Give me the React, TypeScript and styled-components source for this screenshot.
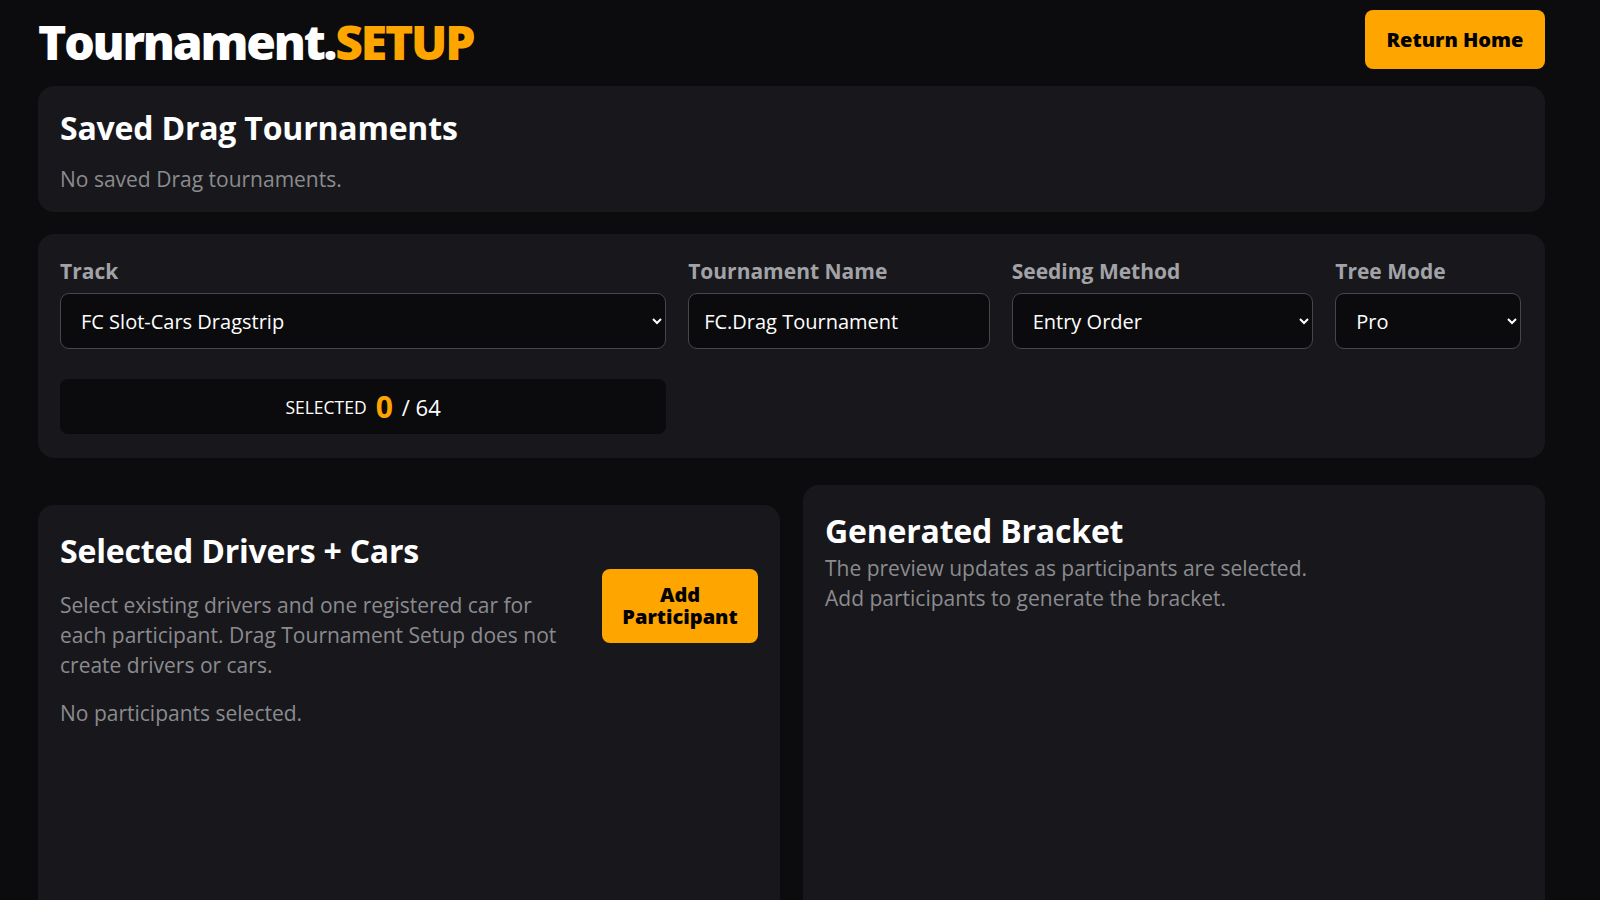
import React from "react";
import styled, { createGlobalStyle } from "styled-components";

const GlobalStyle = createGlobalStyle`
  html, body {
    margin: 0;
    padding: 0;
    background: #0c0c0e;
    color: #ffffff;
    font-family: "Open Sans", "Noto Sans", sans-serif;
  }
  * { box-sizing: border-box; }
`;

const Page = styled.div`
  padding: 10px 55px 38px 38px;
  display: flex;
  flex-direction: column;
`;

const Header = styled.header`
  display: flex;
  align-items: center;
  justify-content: space-between;
  height: 59px;
`;

const Logo = styled.h1`
  margin: 0;
  font-size: 48px;
  font-weight: 800;
  letter-spacing: -2.2px;
  color: #ffffff;
  line-height: 1;
  padding-top: 4px;
`;

const Accent = styled.span`
  color: #ffa500;
`;

const PrimaryButton = styled.button<{ $compact?: boolean }>`
  background: #ffa500;
  color: #000000;
  border: none;
  border-radius: 8px;
  font-family: inherit;
  font-weight: 800;
  font-size: 20px;
  line-height: 22px;
  cursor: pointer;
  padding: 0 12px;
  height: ${(p) => (p.$compact ? "74px" : "59px")};
  width: ${(p) => (p.$compact ? "156px" : "180px")};
  flex-shrink: 0;
`;

const Panel = styled.section<{ $offset?: number; $pad?: string }>`
  background: #18181c;
  border-radius: 16px;
  padding: ${(p) => p.$pad ?? "22px"};
  margin-top: ${(p) => p.$offset ?? 0}px;
`;

const PanelTitle = styled.h2<{ $lh?: number }>`
  margin: 0;
  font-size: 32px;
  font-weight: 700;
  line-height: ${(p) => p.$lh ?? 38}px;
  letter-spacing: -0.2px;
  color: #ffffff;
`;

const Muted = styled.p<{ $gap?: number }>`
  margin: ${(p) => p.$gap ?? 0}px 0 0;
  font-size: 21px;
  line-height: 30px;
  color: #8b8b8f;
`;

const FormGrid = styled.div`
  display: grid;
  grid-template-columns: 607fr 302fr 302fr 186fr;
  column-gap: 22px;
  row-gap: 30px;
`;

const Field = styled.label`
  display: flex;
  flex-direction: column;
  gap: 8px;
`;

const FieldLabel = styled.span`
  font-size: 21px;
  font-weight: 700;
  line-height: 27px;
  color: #a3a3a7;
`;

const controlCss = `
  height: 56px;
  width: 100%;
  background-color: #0b0b0d;
  color: #ffffff;
  border: 1px solid #46464c;
  border-radius: 9px;
  font-family: "Open Sans", "Noto Sans", sans-serif;
  font-size: 20px;
  color-scheme: dark;
  outline: none;
`;

const Select = styled.select`
  ${controlCss}
  padding: 0 8px 0 16px;
`;

const TextInput = styled.input`
  ${controlCss}
  padding: 0 15px;
`;

const Counter = styled.div`
  grid-column: 1;
  height: 55px;
  background: #0b0b0d;
  border-radius: 8px;
  display: flex;
  align-items: center;
  justify-content: center;
  gap: 9px;
`;

const CounterLabel = styled.span`
  font-size: 17.5px;
  text-transform: uppercase;
  color: #ffffff;
`;

const CounterValue = styled.span`
  font-size: 30px;
  font-weight: 700;
  color: #ffa500;
`;

const CounterTotal = styled.span`
  font-size: 22px;
  color: #ffffff;
`;

const Columns = styled.div`
  display: grid;
  grid-template-columns: 1fr 1fr;
  gap: 23px;
  margin-top: 27px;
  align-items: stretch;
`;

const TallPanel = styled(Panel)`
  min-height: 715px;
  padding-top: 27px;
`;

const PanelHead = styled.div`
  display: flex;
  align-items: center;
  justify-content: space-between;
  gap: 28px;
`;

const HeadText = styled.div`
  display: flex;
  flex-direction: column;
  flex: 1;
`;

export default function App() {
  return (
    <>
      <GlobalStyle />
      <Page>
        <Header>
          <Logo>
            Tournament.<Accent>SETUP</Accent>
          </Logo>
          <PrimaryButton>Return Home</PrimaryButton>
        </Header>

        <Panel $offset={17} $pad="24px 22px 18px">
          <PanelTitle $lh={36}>Saved Drag Tournaments</PanelTitle>
          <Muted $gap={18}>No saved Drag tournaments.</Muted>
        </Panel>

        <Panel $offset={22} $pad="24px 24px 24px 22px">
          <FormGrid>
            <Field>
              <FieldLabel>Track</FieldLabel>
              <Select defaultValue="fc">
                <option value="fc">FC Slot-Cars Dragstrip</option>
              </Select>
            </Field>
            <Field>
              <FieldLabel>Tournament Name</FieldLabel>
              <TextInput defaultValue="FC.Drag Tournament" />
            </Field>
            <Field>
              <FieldLabel>Seeding Method</FieldLabel>
              <Select defaultValue="entry">
                <option value="entry">Entry Order</option>
              </Select>
            </Field>
            <Field>
              <FieldLabel>Tree Mode</FieldLabel>
              <Select defaultValue="pro">
                <option value="pro">Pro</option>
              </Select>
            </Field>
            <Counter>
              <CounterLabel>Selected</CounterLabel>
              <CounterValue>0</CounterValue>
              <CounterTotal>/ 64</CounterTotal>
            </Counter>
          </FormGrid>
        </Panel>

        <Columns>
          <TallPanel $offset={20}>
            <PanelHead>
              <HeadText>
                <PanelTitle>Selected Drivers + Cars</PanelTitle>
                <Muted $gap={20}>
                  Select existing drivers and one registered car for each
                  participant. Drag Tournament Setup does not create drivers or
                  cars.
                </Muted>
              </HeadText>
              <PrimaryButton $compact>Add Participant</PrimaryButton>
            </PanelHead>
            <Muted $gap={18}>No participants selected.</Muted>
          </TallPanel>
          <TallPanel>
            <PanelTitle>Generated Bracket</PanelTitle>
            <Muted $gap={3}>
              The preview updates as participants are selected.
              <br />
              Add participants to generate the bracket.
            </Muted>
          </TallPanel>
        </Columns>
      </Page>
    </>
  );
}
